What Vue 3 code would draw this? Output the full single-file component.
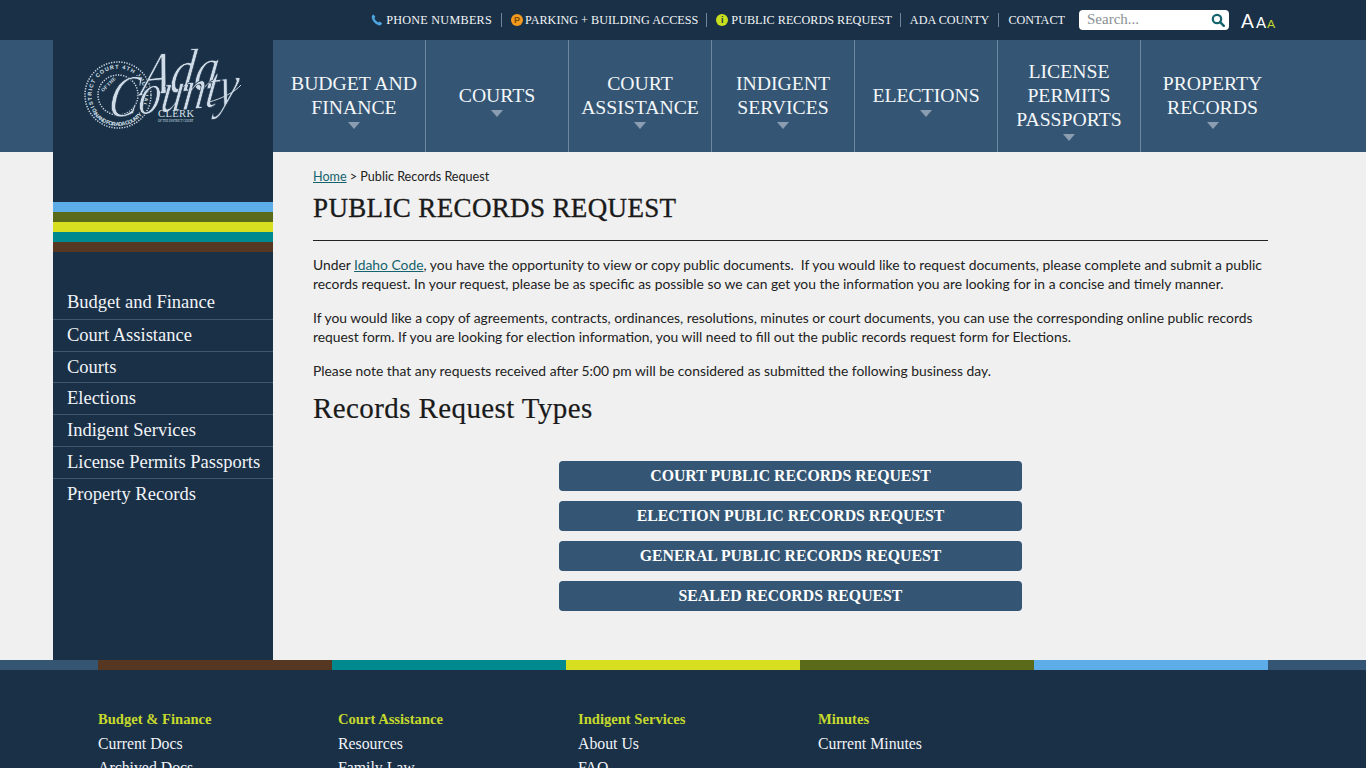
<template>
  <div class="page">
    <div class="topbar">
      <a class="top-link phone">
        <svg class="ico" viewBox="0 0 12 12" width="12" height="12"><path d="M2.6.6 4.4 3 3.4 4.3c.6 1.7 2 3.2 3.9 4.1l1.300-1 2.400 1.800c-.4 1.300-1.400 2.200-2.500 2.200C4.600 11 .8 6.600.8 2.800.8 1.800 1.500 1 2.600.6Z" fill="#4da6e0"/></svg>
        PHONE NUMBERS
      </a>
      <a class="top-link tight">
        <span class="dot orange">P</span>PARKING + BUILDING ACCESS
      </a>
      <a class="top-link tight">
        <span class="dot lime">i</span>PUBLIC RECORDS REQUEST
      </a>
      <a class="top-link">ADA COUNTY</a>
      <a class="top-link last">CONTACT</a>
      <div class="search">
        <span>Search...</span>
        <svg viewBox="0 0 14 14" width="14" height="14"><circle cx="6" cy="6" r="4.200" fill="none" stroke="#14636e" stroke-width="2.200"/><path d="m9.200 9.200 3.600 3.600" stroke="#14636e" stroke-width="2.400" stroke-linecap="round"/></svg>
      </div>
      <div class="sizes"><span class="a1">A</span><span class="a2">A</span><span class="a3">A</span></div>
    </div>

    <header class="navband">
      <div class="logo">
        <svg viewBox="0 0 220 112" width="220" height="112">
          <defs>
            <path id="sealTop" d="M44 71a26.400 26.400 0 1 1 44 -3"/>
            <path id="sealBottom" d="M36 66a31 31 0 0 0 58 0"/>
          </defs>
          <circle cx="65" cy="55" r="33" fill="none" stroke="#c9d7e3" stroke-width="1.500" stroke-dasharray="1.300 1.300"/>
          <circle cx="65" cy="55" r="20" fill="none" stroke="#c9d7e3" stroke-width="1.500" stroke-dasharray="1.300 1.300"/>
          <text class="seal-text"><textPath href="#sealTop" textLength="110">DISTRICT COURT 4TH JUDICIAL</textPath></text>
          <text class="seal-text"><textPath href="#sealBottom" textLength="56" startOffset="9">IN AND FOR ADA COUNTY</textPath></text>
          <text class="seal-of" x="50" y="52" transform="rotate(-45 50 52)">OF THE</text>
          <text class="script" x="0" y="0" font-size="60" textLength="78" lengthAdjust="spacingAndGlyphs" transform="translate(86 56) rotate(-6) skewX(-14)">Ada</text>
          <text class="script" x="0" y="0" font-size="58" textLength="130" lengthAdjust="spacingAndGlyphs" transform="translate(54 78) rotate(-6) skewX(-14)">County</text>
          <path d="M156 62c12-3 26-10 32-17" fill="none" stroke="#c9d7e3" stroke-width="1"/>
          <text class="clerk" x="105" y="77">CLERK</text>
          <text class="clerk-sub" x="105" y="82">OF THE DISTRICT COURT</text>
        </svg>
      </div>
      <nav class="mainnav">
        <a v-for="item in navItems" :key="item" class="nav-item">
          <span class="nav-text" v-html="item"></span>
        </a>
      </nav>
    </header>

    <div class="middle">
      <aside class="sidebar">
        <div class="stripes">
          <div v-for="c in stripeColors" :key="c" class="stripe" :style="{ background: c }"></div>
        </div>
        <ul class="sidemenu">
          <li v-for="s in sideLinks" :key="s">{{ s }}</li>
        </ul>
      </aside>
      <main class="content">
        <div class="crumbs"><a>Home</a> &gt; Public Records Request</div>
        <h1>PUBLIC RECORDS REQUEST</h1>
        <p>Under <a>Idaho Code</a>, you have the opportunity to view or copy public documents.&nbsp; If you would like to request documents, please complete and submit a public records request. In your request, please be as specific as possible so we can get you the information you are looking for in a concise and timely manner.</p>
        <p>If you would like a copy of agreements, contracts, ordinances, resolutions, minutes or court documents, you can use the corresponding online public records request form. If you are looking for election information, you will need to fill out the public records request form for Elections.</p>
        <p>Please note that any requests received after 5:00 pm will be considered as submitted the following business day.</p>
        <h2>Records Request Types</h2>
        <div class="buttons">
          <a v-for="b in buttons" :key="b" class="btn">{{ b }}</a>
        </div>
      </main>
    </div>

    <div class="colorband">
      <div v-for="seg in bandSegments" :key="seg.c" :style="{ background: seg.c, width: seg.w }"></div>
    </div>

    <footer class="footer">
      <div v-for="col in footerCols" :key="col.title" class="fcol">
        <h4>{{ col.title }}</h4>
        <a v-for="l in col.links" :key="l">{{ l }}</a>
      </div>
    </footer>
  </div>
</template>

<script setup>
const navItems = [
  'BUDGET AND<br>FINANCE',
  'COURTS',
  'COURT<br>ASSISTANCE',
  'INDIGENT<br>SERVICES',
  'ELECTIONS',
  'LICENSE<br>PERMITS<br>PASSPORTS',
  'PROPERTY<br>RECORDS',
]
const stripeColors = ['#5dade8', '#5a6a18', '#d8de20', '#008a8f', '#553722']
const sideLinks = [
  'Budget and Finance',
  'Court Assistance',
  'Courts',
  'Elections',
  'Indigent Services',
  'License Permits Passports',
  'Property Records',
]
const buttons = [
  'COURT PUBLIC RECORDS REQUEST',
  'ELECTION PUBLIC RECORDS REQUEST',
  'GENERAL PUBLIC RECORDS REQUEST',
  'SEALED RECORDS REQUEST',
]
const bandSegments = [
  { c: '#345673', w: '98px' },
  { c: '#553722', w: '234px' },
  { c: '#008a8f', w: '234px' },
  { c: '#d8de20', w: '234px' },
  { c: '#5a6a18', w: '234px' },
  { c: '#5dade8', w: '234px' },
  { c: '#345674', w: '98px' },
]
const footerCols = [
  { title: 'Budget & Finance', links: ['Current Docs', 'Archived Docs'] },
  { title: 'Court Assistance', links: ['Resources', 'Family Law'] },
  { title: 'Indigent Services', links: ['About Us', 'FAQ'] },
  { title: 'Minutes', links: ['Current Minutes'] },
]
</script>

<style>
html { scrollbar-width: none; }
body { background: #f0f0f0; }
</style>

<style scoped>
.page {
  font-family: Lato, "Noto Sans", sans-serif;
  color: #222;
  background: #f0f0f0;
}
.topbar {
  height: 40px;
  box-sizing: border-box;
  background: #1a3047;
  display: flex;
  align-items: center;
  padding-right: 90px;
  justify-content: flex-end;
  font-family: "Liberation Serif", serif;
}
.top-link {
  display: flex;
  align-items: center;
  color: #f2f5f7;
  font-size: 12.200px;
  line-height: 14px;
  padding-right: 9px;
  margin-right: 9px;
  border-right: 1px solid #6f8598;
  white-space: nowrap;
}
.top-link.phone { letter-spacing: .25px; }
.top-link.tight { padding-right: 8px; }
.top-link.last { border-right: none; padding-right: 0; margin-right: 14px; }
.ico { margin-right: 3px; }
.dot {
  width: 12px;
  height: 12px;
  border-radius: 50%;
  font: bold 9px/12px "Liberation Sans", sans-serif;
  text-align: center;
  margin-right: 2px;
  color: #1a3047;
}
.dot.orange { background: #f39a1e; color: #7a4a08; }
.dot.lime { background: #c6e01e; margin-right: 3px; }
.search {
  width: 150px;
  height: 20px;
  box-sizing: border-box;
  background: #fff;
  border-radius: 4px;
  display: flex;
  align-items: center;
  justify-content: space-between;
  padding: 0 4px 2px 8px;
  color: #8a8f94;
  font-size: 15px;
}
.search svg { margin-top: 2px; }
.sizes {
  margin-left: 12px;
  width: 35px;
  display: flex;
  align-items: baseline;
  font-family: Lato, sans-serif;
  color: #fff;
  line-height: 20px;
  padding-top: 4px;
}
.a1 { font-size: 19px; }
.a2 { font-size: 15px; margin-left: 2px; }
.a3 { font-size: 12px; color: #c6d92c; margin-left: 1px; }

.navband {
  height: 112px;
  background: #345674;
  display: flex;
  padding-left: 53px;
}
.logo {
  width: 220px;
  height: 112px;
  background: #1a3047;
}
.logo svg { display: block; }
.seal-text { font: bold 5.5px "Liberation Sans", sans-serif; fill: #d5e0e9; }
.seal-of { font: bold 5px "Liberation Serif", serif; fill: #d5e0e9; }
.script {
  font-family: "Liberation Serif", serif;
  font-style: italic;
  fill: #cfdce8;
  stroke: #1a3047;
  stroke-width: .8px;
}
.clerk { font: 10.500px "Liberation Serif", serif; fill: #d5e0e9; letter-spacing: .4px; }
.clerk-sub { font: 3px "Liberation Serif", serif; fill: #d5e0e9; }
.mainnav {
  display: flex;
  padding-left: 10px;
}
.nav-item {
  width: 143px;
  box-sizing: border-box;
  border-right: 1px solid #6c879f;
  display: flex;
  align-items: center;
  justify-content: center;
  text-align: center;
  color: #f4f7f9;
  font-family: "Liberation Serif", serif;
  font-size: 19.700px;
  line-height: 24px;
  padding-bottom: 3px;
}
.nav-item:last-child { border-right: none; }
.nav-text { position: relative; }
.nav-text::after {
  content: "";
  position: absolute;
  left: 50%;
  top: 100%;
  margin: 3px 0 0 -6px;
  border-left: 6px solid transparent;
  border-right: 6px solid transparent;
  border-top: 7px solid #8b9db0;
}

.middle {
  display: flex;
  height: 508px;
  padding-left: 53px;
}
.sidebar {
  width: 220px;
  flex: none;
  background: #1a3047;
  padding-top: 50px;
  box-sizing: border-box;
}
.stripe { height: 10px; }
.sidemenu {
  list-style: none;
  margin: 35px 0 0;
  padding: 0;
}
.sidemenu li {
  font-family: "Liberation Serif", serif;
  font-size: 18.500px;
  line-height: 30px;
  height: 31.800px;
  box-sizing: border-box;
  padding-left: 14px;
  color: #f1f4f7;
  border-bottom: 1px solid #3d5870;
}
.sidemenu li:first-child { height: 32.800px; padding-top: 1px; line-height: 29px; }
.sidemenu li:last-child { border-bottom: none; }
.content {
  width: 955px;
  margin-left: 40px;
  padding-top: 16px;
  font-size: 13.850px;
  line-height: 19px;
}
.crumbs { line-height: 18px; font-size: 12.600px; }
a { color: inherit; }
.crumbs a, .content p a {
  color: #14636e;
  text-decoration: underline;
}
h1 {
  margin: 6px 0 14px;
  padding-bottom: 16px;
  border-bottom: 1px solid #222;
  font-family: "Liberation Serif", serif;
  font-weight: 400;
  font-size: 27px;
  line-height: 32px;
  height: 32px;
  color: #1a1a1a;
  letter-spacing: .36px;
  -webkit-text-stroke: .35px #1a1a1a;
}
.content p { margin: 0 0 15px; }
h2 {
  margin: -3px 0 37px;
  font-family: "Liberation Serif", serif;
  font-weight: 400;
  font-size: 29px;
  line-height: 32px;
  letter-spacing: .4px;
  color: #1a1a1a;
  -webkit-text-stroke: .2px #1a1a1a;
}
.buttons {
  display: flex;
  flex-direction: column;
  gap: 10px;
  width: 463px;
  margin-left: 246px;
}
.btn {
  height: 30px;
  border-radius: 4px;
  background: #345674;
  color: #fff;
  font-family: "Liberation Serif", serif;
  font-weight: 700;
  font-size: 15.800px;
  line-height: 30px;
  text-align: center;
}

.colorband {
  display: flex;
  height: 10px;
}
.footer {
  background: #1a3047;
  height: 240px;
  box-sizing: border-box;
  padding: 39px 0 0 98px;
  display: flex;
  font-family: "Liberation Serif", serif;
}
.fcol { width: 240px; display: flex; flex-direction: column; }
.fcol h4 {
  margin: 0 0 1px;
  font-size: 14.600px;
  line-height: 20px;
  font-weight: 700;
  color: #c6d92c;
}
.fcol a {
  color: #f1f4f7;
  font-size: 15.800px;
  line-height: 24px;
  margin-top: 2px;
  height: 22px;
}
</style>
